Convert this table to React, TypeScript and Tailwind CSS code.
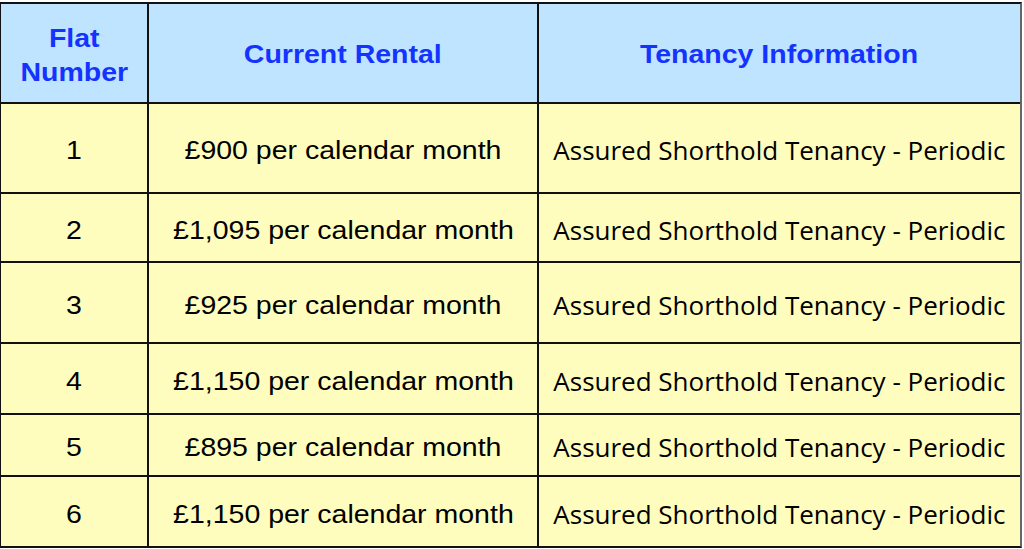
import React from "react";

const rows = [
  { n: "1", rent: "£900 per calendar month", h: "h-[90px]" },
  { n: "2", rent: "£1,095 per calendar month", h: "h-[69px]" },
  { n: "3", rent: "£925 per calendar month", h: "h-[81px]" },
  { n: "4", rent: "£1,150 per calendar month", h: "h-[71px]" },
  { n: "5", rent: "£895 per calendar month", h: "h-[62px]" },
  { n: "6", rent: "£1,150 per calendar month", h: "h-[69px]" },
];

const arial = "font-['Liberation_Sans',Arial,sans-serif]";

export default function App() {
  return (
    <div className="w-[1024px] h-[549px] bg-white pt-[2px] overflow-hidden">
      <div className="w-[1022px] border-t-2 border-b-2 border-l border-r-2 border-t-[#111] border-b-[#111] border-l-[#111] border-r-[#666] flex flex-col">
        {/* Header */}
        <div className={`flex h-[100px] bg-[#bfe4ff] border-b-2 border-[#111] ${arial} font-bold text-[25px] text-[#1433ff]`}>
          <div className="w-[148px] shrink-0 border-r-2 border-[#111] flex items-center justify-center">
            <span className="inline-block scale-x-[1.14] translate-y-[2px] text-center leading-[34px]">
              Flat
              <br />
              Number
            </span>
          </div>
          <div className="w-[390px] shrink-0 border-r-2 border-[#111] flex items-center justify-center">
            <span className="inline-block scale-x-[1.14] translate-y-[2px]">Current Rental</span>
          </div>
          <div className="flex-1 flex items-center justify-center">
            <span className="inline-block scale-x-[1.14] translate-y-[2px]">Tenancy Information</span>
          </div>
        </div>
        {rows.map((r, i) => (
          <div
            key={i}
            className={`flex ${r.h} bg-[#fffdbd] ${i < rows.length - 1 ? "border-b-2 border-[#111]" : ""} text-[25px] text-black`}
          >
            <div className={`w-[148px] shrink-0 border-r-2 border-[#111] flex items-center justify-center ${arial}`}>
              <span className="inline-block scale-x-[1.14] translate-y-[3px]">{r.n}</span>
            </div>
            <div className={`w-[390px] shrink-0 border-r-2 border-[#111] flex items-center justify-center ${arial}`}>
              <span className="inline-block scale-x-[1.14] translate-y-[3px] whitespace-nowrap">{r.rent}</span>
            </div>
            <div className="flex-1 flex items-center justify-center font-['Open_Sans',sans-serif]">
              <span className="inline-block scale-x-[1.04] translate-y-[3px] whitespace-nowrap">Assured Shorthold Tenancy - Periodic</span>
            </div>
          </div>
        ))}
      </div>
    </div>
  );
}
